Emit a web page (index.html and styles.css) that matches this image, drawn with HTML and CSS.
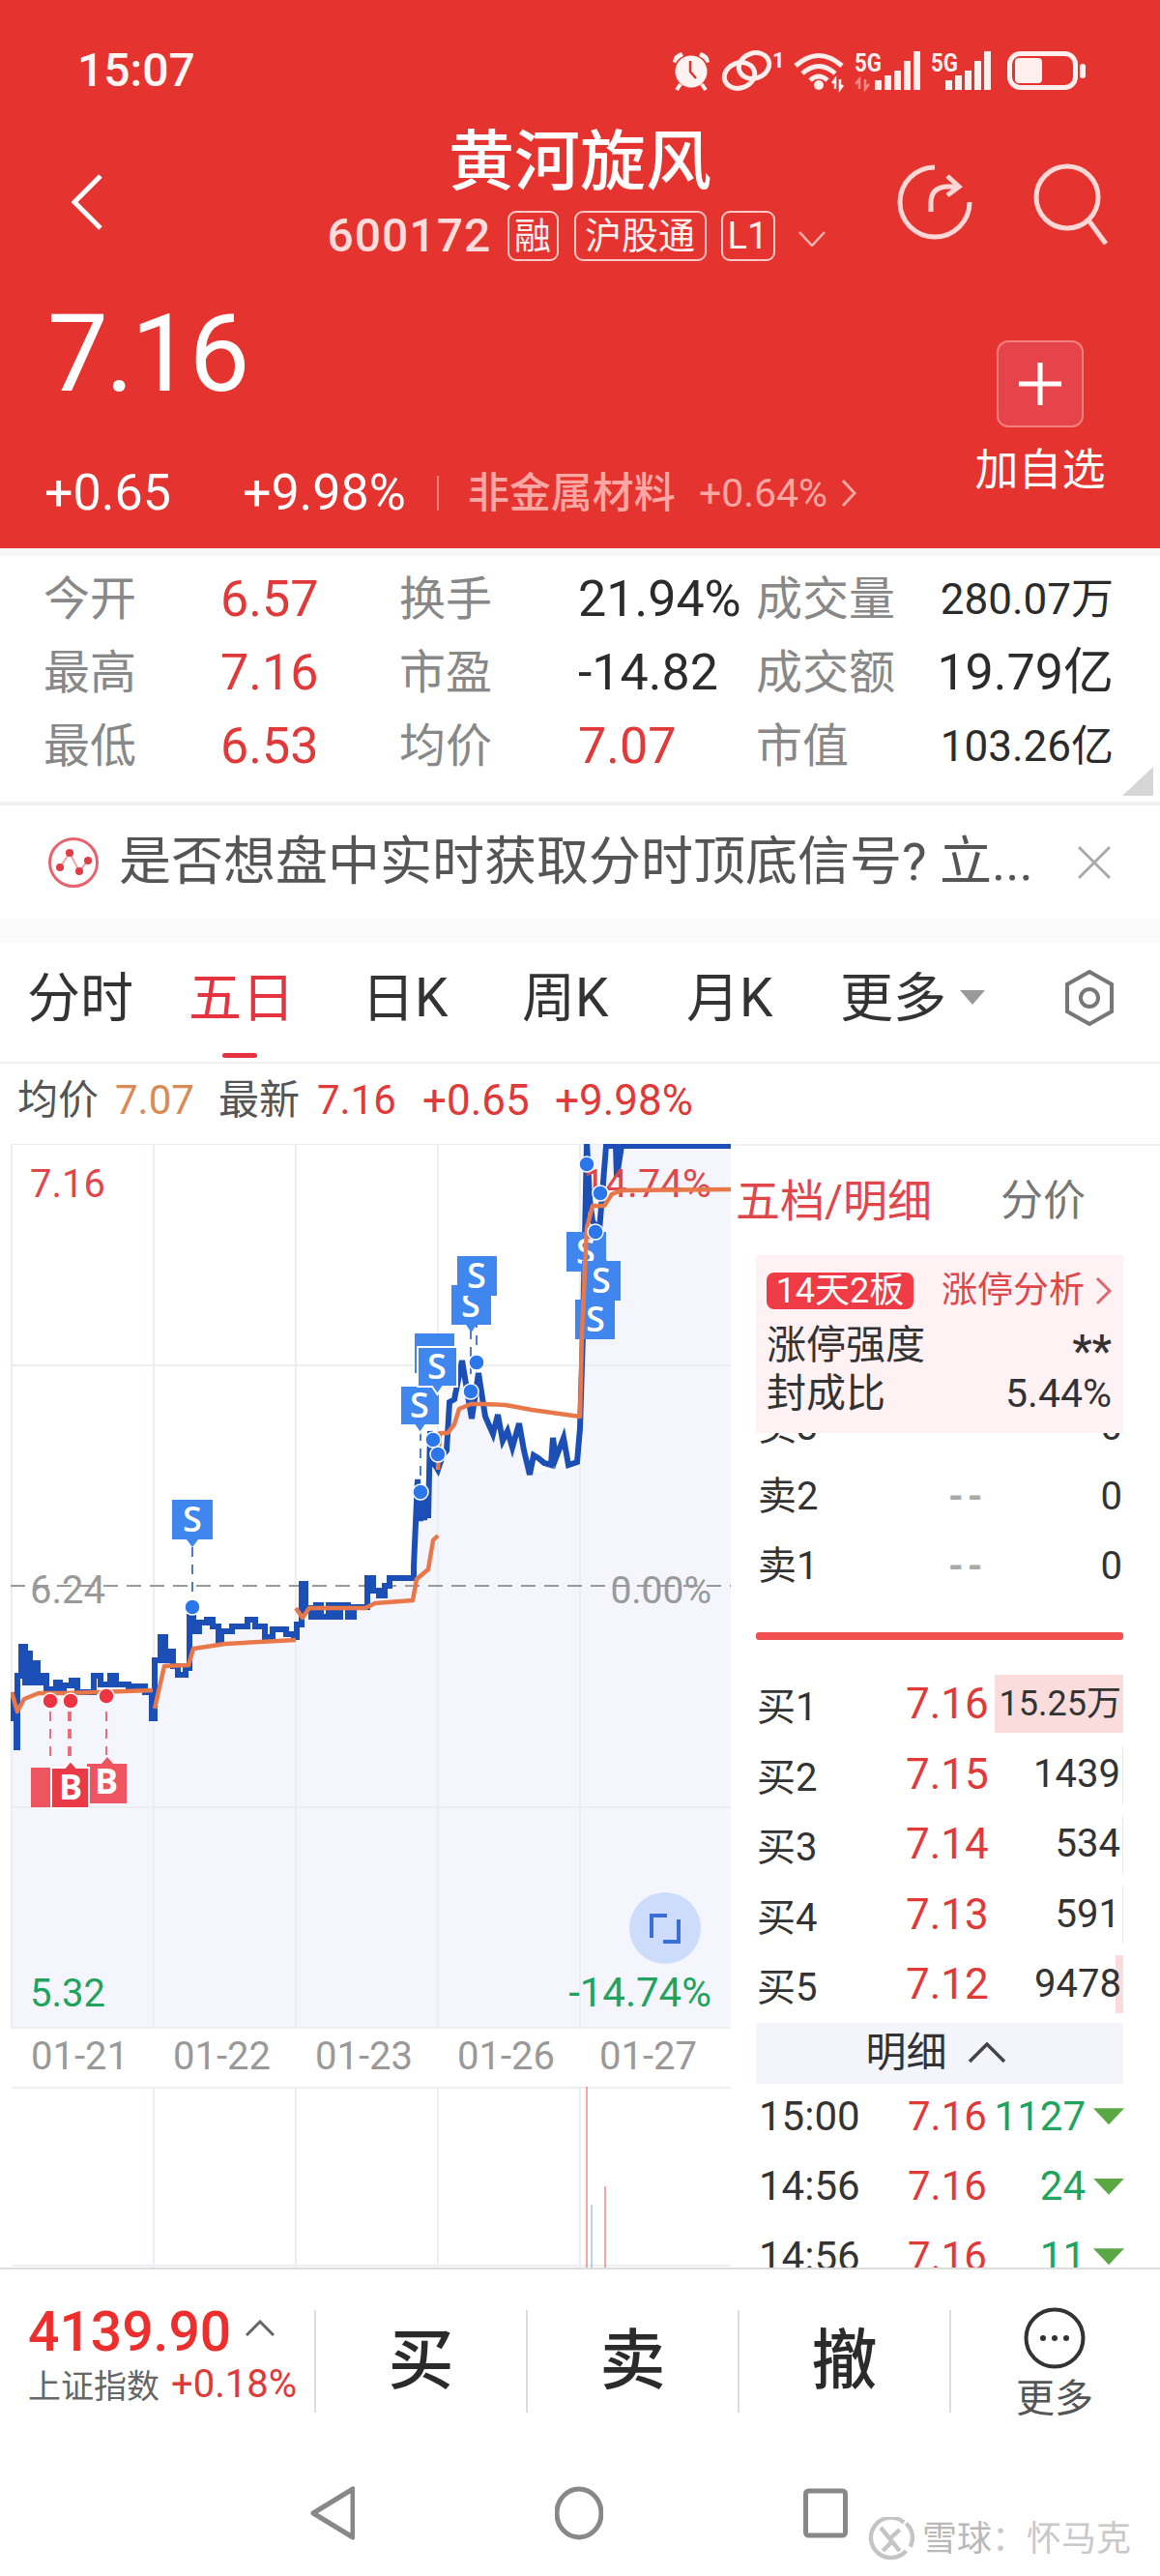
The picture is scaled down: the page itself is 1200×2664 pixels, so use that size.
FILE: index.html
```html
<!DOCTYPE html>
<html lang="zh-CN">
<head>
<meta charset="utf-8">
<title>黄河旋风</title>
<link rel="stylesheet" href="styles.css">
</head>
<body>
<div class="page">
  <header class="hdr">
    <div class="status">
      <span class="time">15:07</span>
      <svg class="status-icons" viewBox="0 0 430 46" width="430" height="46">
        <g class="si-alarm">
          <circle cx="20" cy="24" r="16.500"/>
          <path d="M1 14 Q2 6 10 4 L12 8 Q7 10 4 15Z M39 14 Q38 6 30 4 L28 8 Q33 10 36 15Z"/>
          <path class="si-foot" d="M9 37 L5 43 M31 37 L35 43"/>
          <path class="si-hand" d="M19 13 V24 L25 31"/>
        </g>
        <g class="si-line">
          <ellipse cx="85" cy="18" rx="16" ry="13" transform="rotate(-20 85 18)"/>
          <ellipse cx="70" cy="28" rx="16" ry="13" transform="rotate(-20 70 28)"/>
        </g>
        <text class="si-txt" x="104" y="20" font-size="22">1</text>
        <g class="si-line">
          <path d="M128 18 Q152 -3 176 18"/>
          <path d="M135 26 Q152 11 169 26"/>
          <path d="M143 33 Q152 25 161 33"/>
        </g>
        <circle class="si-fill" cx="152" cy="38" r="5"/>
        <path class="si-thin" d="M169 42 V32 L166 36 M174 32 V42 L177 38"/>
        <text class="si-txt" x="189" y="24" font-size="25" textLength="28" lengthAdjust="spacingAndGlyphs">5G</text>
        <path class="si-thin si-faint" d="M194 42 V32 L190 37 M200 32 V42 L204 37"/>
        <g class="si-fill">
          <rect x="210" y="33" width="7" height="10"/><rect x="220" y="28" width="7" height="15"/><rect x="230" y="23" width="7" height="20"/><rect x="240" y="13" width="7" height="30"/><rect x="250" y="3" width="7" height="40"/>
        </g>
        <text class="si-txt" x="268" y="24" font-size="25" textLength="28" lengthAdjust="spacingAndGlyphs">5G</text>
        <g class="si-fill">
          <rect x="283" y="33" width="7" height="10"/><rect x="293" y="28" width="7" height="15"/><rect x="303" y="23" width="7" height="20"/><rect x="313" y="13" width="7" height="30"/><rect x="323" y="3" width="7" height="40"/>
        </g>
        <rect class="si-line" x="349.500" y="5.500" width="68" height="35" rx="11"/>
        <rect class="si-fill" x="355" y="10" width="28" height="26" rx="4"/>
        <rect class="si-fill" x="422" y="16" width="6" height="15" rx="3"/>
      </svg>
    </div>
    <div class="titlebar">
      <div class="tb-left">
        <svg width="32" height="58" viewBox="0 0 32 58"><path class="ic-white" d="M30 2 L3 29 L30 56"/></svg>
      </div>
      <div class="tb-mid">
        <h1 class="name">黄河旋风</h1>
        <div class="sub">
          <span class="code">600172</span>
          <span class="tag tag-a">融</span>
          <span class="tag tag-b">沪股通</span>
          <span class="tag tag-c">L1</span>
          <svg class="sub-chev" width="28" height="16" viewBox="0 0 28 16"><path d="M1 1 L14 15 L27 1"/></svg>
        </div>
      </div>
      <div class="tb-right">
        <svg width="80" height="80" viewBox="0 0 80 80"><path class="ic-pink" d="M40 4 A36 36 0 1 0 76 40"/><path class="ic-pink" d="M36 50 V41 Q36 25 52 24 L64 24 M53 13 L65 24 L53 33"/></svg>
        <svg width="78" height="86" viewBox="0 0 78 86"><circle class="ic-pink" cx="35" cy="35" r="32"/><path class="ic-pink" d="M58 60 L75 83"/></svg>
      </div>
    </div>
    <div class="quote">
      <div class="q-left">
        <div class="price">7.16</div>
        <div class="q-sub">
          <span class="chg">+0.65</span>
          <span class="pct">+9.98%</span>
          <span class="q-div"></span>
          <span class="sector">非金属材料</span>
          <span class="sector-p">+0.64%</span>
          <svg width="16" height="30" viewBox="0 0 16 30"><path class="ic-faint" d="M2 2 L14 15 L2 28"/></svg>
        </div>
      </div>
      <div class="q-right">
        <div class="add-btn"><svg width="46" height="46" viewBox="0 0 46 46"><path class="ic-white" d="M23 1 V45 M1 23 H45"/></svg></div>
        <div class="add-label">加自选</div>
      </div>
    </div>
  </header>

  <section class="stats">
    <span class="lb">今开</span><span class="up">6.57</span><span class="lb">换手</span><span class="val">21.94%</span><span class="lb">成交量</span><span class="val big">280.07万</span>
    <span class="lb">最高</span><span class="up">7.16</span><span class="lb">市盈</span><span class="val">-14.82</span><span class="lb">成交额</span><span class="val mid">19.79亿</span>
    <span class="lb">最低</span><span class="up">6.53</span><span class="lb">均价</span><span class="up">7.07</span><span class="lb">市值</span><span class="val big">103.26亿</span>
    <i class="corner"></i>
  </section>

  <section class="notice">
    <svg width="54" height="54" viewBox="0 0 54 54"><circle class="n-ring" cx="27" cy="27" r="24.500"/><path class="n-line" d="M13 32 L23 17 L33 36 L42 25"/><circle class="n-dot" cx="13" cy="32" r="4"/><circle class="n-dot" cx="23" cy="17" r="4"/><circle class="n-dot" cx="33" cy="36" r="4"/><circle class="n-dot" cx="42" cy="25" r="4"/></svg>
    <span class="n-text">是否想盘中实时获取分时顶底信号? 立...</span>
    <svg class="n-close" width="36" height="36" viewBox="0 0 36 36"><path d="M2 2 L34 34 M34 2 L2 34"/></svg>
  </section>
  <div class="gap"></div>

  <nav class="tabs">
    <span>分时</span>
    <span class="on">五日</span>
    <span>日K</span>
    <span>周K</span>
    <span>月K</span>
    <span class="more">更多<i class="tri"></i></span>
    <svg width="52" height="60" viewBox="0 0 52 60"><path class="hex" d="M26 3 L49 16 V44 L26 57 L3 44 V16Z"/><circle class="hex" cx="26" cy="30" r="9"/></svg>
  </nav>

  <div class="info">
    <span class="i-l">均价</span><span class="i-o">7.07</span><span class="i-l">最新</span><span class="i-r">7.16</span><span class="i-r i-b">+0.65</span><span class="i-r i-b">+9.98%</span>
  </div>

  <main class="main">
    <div class="left">
      <svg class="chart" width="745" height="915" viewBox="11 1183 745 915">
        <path class="area" d="M12 1777 L13 1777 L17 1807 L18 1733 L23 1703 L27 1740 L33 1740 L37 1720 L42 1740 L52 1747 L60 1747 L77 1738 L83 1750 L97 1750 L103 1733 L108 1742 L117 1733 L123 1742 L150 1745 L158 1760 L160 1777 L163 1717 L169 1693 L177 1710 L187 1732 L193 1725 L197 1672 L200 1687 L220 1680 L227 1697 L230 1687 L257 1675 L275 1693 L303 1695 L310 1680 L315 1638 L320 1663 L378 1665 L383 1632 L390 1645 L402 1650 L407 1632 L427 1632 L432 1530 L443 1570 L445 1480 L453 1520 L462 1500 L465 1450 L478 1407 L488 1467 L495 1420 L510 1483 L520 1490 L537 1472 L548 1525 L597 1512 L600 1477 L603 1380 L607 1183 L756 1183 L756 2098 L12 2098Z"/>
        <g class="grid">
          <path d="M12 1183 H756 M12 1412 H756 M12 1869 H756 M12 2097 H756"/>
          <path d="M12 1183 V2098 M159 1183 V2098 M306 1183 V2098 M453 1183 V2098 M600 1183 V2098"/>
        </g>
        <path class="dash" d="M11 1640 H756"/>
        <text class="ax ax-up" x="31" y="1238">7.16</text>
        <text class="ax ax-mid" x="31" y="1658">6.24</text>
        <text class="ax ax-mid end" x="736" y="1658">0.00%</text>
        <text class="ax ax-dn" x="31" y="2075">5.32</text>
        <text class="ax ax-dn ax-w end" x="736" y="2075">-14.74%</text>

        <path class="p-line" d="M13 1750 V1777 H17 V1807 H18 V1733 H22 V1703 H26 V1740 H28 V1710 H31 V1740 H35 V1720 H39 V1740 H44 V1733 H48 V1747 H58 V1740 H62 V1747 H66 V1743 H74 V1738 H80 V1750 H97 V1733 H104 V1742 H114 V1733 H120 V1742 H133 V1744 H150 V1750 H157 V1777 H160 V1717 H166 V1693 H171 V1717 H175 V1708 H179 V1723 H184 V1732 H192 V1725 H196 V1672 H200 V1687 H206 V1678 H214 V1675 H220 V1682 H226 V1697 H229 V1687 H240 V1682 H256 V1675 H264 V1682 H274 V1693 H282 V1685 H296 V1690 H304 V1693 H307 V1680 H312 V1638 H316 V1663 H322 V1672 H327 V1660 H332 V1672 H340 V1660 H346 V1672 H352 V1660 H360 V1672 H366 V1662 H380 V1632 H386 V1645 H392 V1650 H398 V1640 H403 V1632 H428 V1620 L432 1530 L435 1573 L437 1545 L439 1572 L441 1545 L443 1570 L445 1480 L447 1510 L453 1520 L458 1505 L462 1500 L465 1450 L470 1447 L478 1407 L483 1437 L488 1467 L495 1420 L502 1465 L510 1483 L515 1463 L520 1490 L525 1480 L530 1497 L537 1472 L542 1500 L548 1525 L552 1505 L557 1508 L563 1513 L570 1515 L572 1487 L575 1508 L583 1487 L588 1515 L597 1512 L600 1477 L603 1380 L607 1180 L610 1240 L613 1263 L620 1273 L627 1185 L637 1185 L638 1217 L643 1185 L756 1185"/>

        <path class="m-dash-b" d="M199 1600 V1650 M435 1480 V1530 M487 1375 V1425 M493 1345 V1395"/>
        <path class="m-dash-r" d="M52 1770 V1822 M71 1770 V1822 M73 1770 V1822 M110 1770 V1815"/>

        <g class="flag" transform="translate(178 1551)"><path d="M0 0h42v41h-15l-6 8-6-8H0z"/><text x="21" y="33">S</text></g>
        <g class="flag" transform="translate(467 1329)"><path d="M0 0h41v41h-15l-5.500 8-5.500-8H0z"/><text x="20" y="33">S</text></g>
        <g class="flag" transform="translate(473 1299)"><path d="M0 0h41v41h-15l-5.500 8-5.500-8H0z"/><text x="20" y="33">S</text></g>
        <g class="flag" transform="translate(429 1379)"><path d="M0 0h41v41H0z"/></g>
        <g class="flag flag-o" transform="translate(414 1433)"><path d="M0 0h41v41h-15l-5.500 8-5.500-8H0z"/><text x="20" y="33">S</text></g>
        <g class="flag flag-o" transform="translate(432 1393)"><path d="M0 0h41v41h-15l-5.500 8-5.500-8H0z"/><text x="20" y="33">S</text></g>
        <g class="flag" transform="translate(586 1274)"><path d="M0 0h41v41H0z"/><text x="20" y="33">S</text></g>
        <g class="flag" transform="translate(595 1344)"><path d="M0 41h41V0H0z"/><text x="21" y="33">S</text></g>
        <g class="flag" transform="translate(602 1304)"><path d="M0 41h40V0H26l-6-8-6 8H0z"/><text x="20" y="33">S</text></g>

        <g class="flag-r flag-r1" transform="translate(32 1828)"><path d="M0 0h41v41H0z"/></g>
        <g class="flag-r flag-r2" transform="translate(90 1824)"><path d="M0 0h15l6-7 6 7h14v41H0z"/><text x="20" y="31">B</text></g>
        <g class="flag-r flag-o" transform="translate(53 1828)"><path d="M0 0h14l6-7 6 7h13v42H0z"/><text x="20" y="33">B</text></g>

        <text class="ax ax-up end" x="736" y="1238">14.74%</text>
        <path class="a-line" d="M12 1750 L18 1770 L25 1757 L40 1751 L67 1751 L100 1750 L158 1748 M160 1767 L170 1723 L195 1722 L200 1705 L233 1700 L306 1696 M306 1663 L313 1673 L320 1663 L378 1663 L388 1658 L427 1655 L431 1633 L443 1623 L448 1593 L453 1588 M453 1520 L455 1482 L463 1482 L470 1473 L475 1457 L487 1452 L500 1452 L523 1453 L550 1458 L600 1465 L602 1380 L607 1270 L613 1247 L625 1247 L633 1235 L643 1231 L756 1230"/>

        <g class="dot-b">
          <circle cx="199" cy="1662" r="8"/><circle cx="435" cy="1543" r="8"/><circle cx="448" cy="1489" r="8"/><circle cx="453" cy="1504" r="8"/><circle cx="487" cy="1439" r="8"/><circle cx="493" cy="1409" r="8"/><circle cx="607" cy="1204" r="8"/><circle cx="621" cy="1234" r="8"/><circle cx="616" cy="1274" r="8"/>
        </g>
        <g class="dot-r">
          <circle cx="52" cy="1759" r="8"/><circle cx="73" cy="1759" r="8"/><circle cx="110" cy="1754" r="8"/>
        </g>
        <circle class="expand" cx="688" cy="1994" r="37"/>
        <path class="expand-i" d="M674 2004 V1981 H690 M702 1985 V2008 H686"/>
      </svg>
      <div class="dates"><span>01-21</span><span>01-22</span><span>01-23</span><span>01-26</span><span>01-27</span></div>
      <svg class="vol" width="745" height="187" viewBox="11 2158 745 187">
        <g class="grid">
          <path d="M12 2159 H756 M12 2343 H756"/>
          <path d="M159 2158 V2345 M306 2158 V2345 M453 2158 V2345 M600 2158 V2345"/>
        </g>
        <path class="v-r" d="M607 2158 V2345 M626 2261 V2345"/>
        <path class="v-b" d="M612 2280 V2345"/>
      </svg>
    </div>

    <aside class="right">
      <div class="r-tabs"><span class="r-on">五档/明细</span><span class="r-off">分价</span></div>
      <div class="card">
        <div class="c-row">
          <span class="badge">14天2板</span>
          <span class="c-link">涨停分析<svg width="17" height="30" viewBox="0 0 17 30"><path d="M2 2 L15 15 L2 28"/></svg></span>
        </div>
        <div class="c-line c-first"><span>涨停强度</span><span class="c-star">**</span></div>
        <div class="c-line"><span>封成比</span><span>5.44%</span></div>
      </div>
      <div class="sell"><span>卖3</span><span class="dd">--</span><span class="q">0</span></div>
      <div class="sell"><span>卖2</span><span class="dd">--</span><span class="q">0</span></div>
      <div class="sell"><span>卖1</span><span class="dd">--</span><span class="q">0</span></div>
      <div class="bar"></div>
      <div class="buy"><span>买1</span><span class="bp">7.16</span><span class="bq b-1">15.25万</span></div>
      <div class="buy"><span>买2</span><span class="bp">7.15</span><span class="bq b-t">1439</span></div>
      <div class="buy"><span>买3</span><span class="bp">7.14</span><span class="bq b-t">534</span></div>
      <div class="buy"><span>买4</span><span class="bp">7.13</span><span class="bq b-t">591</span></div>
      <div class="buy"><span>买5</span><span class="bp">7.12</span><span class="bq b-5">9478</span></div>
      <div class="detail">明细<svg width="40" height="22" viewBox="0 0 40 22"><path d="M2 20 L20 2 L38 20"/></svg></div>
      <div class="tick"><span>15:00</span><span class="bp">7.16</span><span class="tq">1127</span><i class="dn"></i></div>
      <div class="tick"><span>14:56</span><span class="bp">7.16</span><span class="tq">24</span><i class="dn"></i></div>
      <div class="tick"><span>14:56</span><span class="bp">7.16</span><span class="tq">11</span><i class="dn"></i></div>
    </aside>
  </main>

  <footer class="bottom">
    <div class="idx">
      <div class="idx-top"><span class="idx-num">4139.90</span><svg width="30" height="17" viewBox="0 0 30 17"><path d="M1 16 L15 2 L29 16"/></svg></div>
      <div class="idx-sub"><span class="idx-name">上证指数</span><span class="idx-pct">+0.18%</span></div>
    </div>
    <div class="act">买</div>
    <div class="act">卖</div>
    <div class="act">撤</div>
    <div class="act-more">
      <svg width="64" height="64" viewBox="0 0 64 64"><circle cx="32" cy="32" r="29.500"/><circle class="md" cx="20" cy="32" r="3"/><circle class="md" cx="32" cy="32" r="3"/><circle class="md" cx="44" cy="32" r="3"/></svg>
      <span>更多</span>
    </div>
  </footer>

  <div class="navbar">
    <svg width="46" height="56" viewBox="0 0 46 56"><path d="M44 3 V53 L3 28Z"/></svg>
    <svg width="50" height="56" viewBox="0 0 50 56"><ellipse cx="25" cy="28" rx="23" ry="25"/></svg>
    <svg width="46" height="56" viewBox="0 0 46 56"><rect x="2.500" y="5" width="41" height="46" rx="3"/></svg>
    <div class="mark">
      <svg width="48" height="46" viewBox="0 0 44 42"><path d="M34 5 A19 19 0 1 0 36 32"/><path d="M12 10 L30 32 M30 12 L20 21 M14 32 L22 24 M36 6 A18 18 0 0 1 40 28"/></svg>
      <span class="mk-a">雪球</span><span class="mk-b">：怀马克</span>
    </div>
  </div>
</div>
</body>
</html>
```
FILE: styles.css
```css
* { box-sizing: border-box; }
html, body { margin: 0; padding: 0; background: #fff; }
body { font-family: Roboto, "Noto Sans CJK SC", sans-serif; color: #333; }
.page { width: 1200px; height: 2664px; overflow: hidden; }
svg { display: block; }
i { font-style: normal; }

/* header */
.hdr { height: 567px; background: #e5342f; color: #fff; }
.status { display: flex; justify-content: space-between; align-items: center; height: 96px; padding: 50px 75px 0 80px; }
.time { font-size: 48px; line-height: 46px; font-weight: 500; color: #fff6f4; }
.si-alarm circle, .si-alarm > path { fill: #fff3f1; }
.si-alarm .si-foot { fill: none; stroke: #fff3f1; stroke-width: 4; }
.si-alarm .si-hand { fill: none; stroke: #e5342f; stroke-width: 2.500; }
.si-line { fill: none; stroke: #ffeeec; stroke-width: 5; }
.si-fill { fill: #fff0ee; }
.si-thin { fill: none; stroke: #fff0ee; stroke-width: 2.500; }
.si-faint { stroke: #f08a84; }
.si-txt { fill: #fff0ee; font-family: Roboto, sans-serif; font-weight: 700; }

.titlebar { display: grid; grid-template-columns: 1fr auto 1fr; height: 157px; margin-top: 34px; }
.tb-left { padding: 50px 0 0 74px; }
.ic-white { fill: none; stroke: #fff; stroke-width: 5; }
.ic-pink { fill: none; stroke: #ffd7d5; stroke-width: 5; }
.ic-faint { fill: none; stroke: #f9a8a4; stroke-width: 3; }
.tb-right { display: flex; justify-content: flex-end; align-items: flex-start; gap: 62px; padding: 39px 53px 0 0; }
.tb-mid { display: flex; flex-direction: column; align-items: center; }
.name { margin: 0; font-size: 68px; line-height: 76px; font-weight: 500; color: #fff; }
.sub { display: flex; align-items: center; height: 52px; margin: 12px 8px 0 0; color: #ffdcda; }
.code { width: 167px; font-size: 48px; font-weight: 500; letter-spacing: 1px; line-height: 52px; }
.tag { display: flex; justify-content: center; align-items: center; height: 52px; border: 2px solid #ffc9c6; border-radius: 9px; font-size: 38px; line-height: 40px; color: #fff0ee; }
.tag-a { width: 53px; margin-left: 19px; }
.tag-b { width: 137px; margin-left: 16px; }
.tag-c { width: 56px; margin-left: 15px; }
.sub-chev { margin: 6px 0 0 24px; fill: none; stroke: #f9b5b1; stroke-width: 2.500; }

.quote { display: flex; justify-content: space-between; height: 264px; padding-right: 58px; }
.q-left { padding-left: 46px; }
.price { margin-top: 24px; padding-left: 3px; font-size: 112px; line-height: 110px; color: #fff; letter-spacing: -3px; }
.q-sub { display: flex; align-items: center; height: 50px; margin-top: 64px; }
.chg, .pct { font-size: 52px; line-height: 50px; color: #fff; }
.pct { margin-left: 74px; }
.q-div { width: 2px; height: 36px; margin: 0 30px 0 32px; background: #f47f7a; }
.sector { font-size: 43px; line-height: 50px; color: #fba7a3; font-weight: 500; }
.sector-p { margin: 0 14px 0 24px; font-size: 41px; line-height: 50px; color: #fba7a3; }
.q-right { display: flex; flex-direction: column; align-items: center; width: 132px; margin-top: 65px; }
.add-btn { display: flex; justify-content: center; align-items: center; width: 90px; height: 90px; border: 2px solid #f4817d; border-radius: 12px; background: #e7434a; }
.add-label { margin-top: 20px; font-size: 45px; line-height: 50px; color: #fff; white-space: nowrap; }

/* stats */
.stats { position: relative; display: grid; grid-template-columns: 183px 185px 185px 184px 180px 1fr; grid-auto-rows: 76px; align-items: center; height: 266px; padding: 7px 48px 0 45px; border-top: 8px solid #f8f8f8; border-bottom: 4px solid #f1f1f1; }
.stats > span { line-height: 60px; white-space: nowrap; }
.lb { font-size: 48px; color: #888; }
.up { font-size: 52px; color: #e0393a; }
.val { font-size: 52px; color: #2b2b2b; }
.val.big, .val.mid { grid-column: 6; justify-self: end; }
.val.big { font-size: 44px; }
.val.mid { font-size: 52px; }
.corner { position: absolute; right: 7px; bottom: 6px; width: 32px; height: 30px; background: #d6d6d6; clip-path: polygon(100% 0, 100% 100%, 0 100%); }

/* notice */
.notice { display: flex; align-items: center; height: 118px; padding: 0 0 0 49px; }
.n-ring { fill: #fff; stroke: #e8636f; stroke-width: 3; }
.n-line { fill: none; stroke: #f2a3a9; stroke-width: 2; }
.n-dot { fill: #e23a46; }
.n-text { width: 991px; margin-left: 20px; font-size: 54px; line-height: 60px; color: #555; white-space: nowrap; }
.n-close { fill: none; stroke: #aaa; stroke-width: 3; }
.gap { height: 24px; background: #fbfbfb; }

/* tabs */
.tabs { display: grid; grid-template-columns: 167px 179px 166px 170px 162px 229px auto; align-items: center; height: 125px; padding: 0 0 10px 28px; border-bottom: 2px solid #eee; font-size: 55px; color: #333; }
.tabs > span { position: relative; line-height: 60px; white-space: nowrap; }
.tabs .on { color: #e5343f; }
.tabs .on::after { content: ""; position: absolute; left: 35px; top: 87px; width: 36px; height: 5px; border-radius: 3px; background: #e5343f; }
.more { display: flex; align-items: center; margin-left: -3px; }
.tri { width: 26px; height: 15px; margin-left: 14px; background: #999; clip-path: polygon(0 0, 100% 0, 50% 100%); }
.hex { fill: none; stroke: #777; stroke-width: 4; }

/* info */
.info { display: grid; grid-template-columns: 101px 107px 102px 109px 137px auto; justify-content: start; align-items: center; height: 83px; padding: 0 0 8px 18px; font-size: 42px; }
.info span { line-height: 50px; white-space: nowrap; }
.i-l { color: #555; }
.i-o { color: #d98a55; }
.i-r { color: #e0393a; }
.i-r.i-b { font-size: 44px; }

/* main */
.main { display: flex; height: 1162px; overflow: hidden; }
.left { width: 756px; padding-left: 11px; flex: none; }
.grid path { fill: none; stroke: #eceef3; stroke-width: 2; }
.area { fill: #f5f6fd; }
.dash { fill: none; stroke: #9a9a9a; stroke-width: 2; stroke-dasharray: 15 9; }
.ax { font-size: 40px; font-family: Roboto, sans-serif; }
.ax.end { font-size: 39px; }
.ax.ax-w { font-size: 42px; }
.ax-up.end { font-size: 41px; }
.end { text-anchor: end; }
.ax-up { fill: #e0464a; }
.ax-mid { fill: #999; }
.ax-dn { fill: #1fa35f; }
.p-line { fill: none; stroke: #1b4fb5; stroke-width: 6; stroke-linejoin: miter; }
.a-line { fill: none; stroke: #e8784a; stroke-width: 4.500; stroke-linejoin: round; }
.m-dash-b { fill: none; stroke: #4f7cc8; stroke-width: 2; stroke-dasharray: 10 8; }
.m-dash-r { fill: none; stroke: #e8707c; stroke-width: 2; stroke-dasharray: 10 8; }
.flag path { fill: #3f86ee; }
.flag text { fill: #fff; font-size: 36px; font-family: "Open Sans", sans-serif; font-weight: 600; text-anchor: middle; }
.flag-o path { stroke: #fff; stroke-width: 2; }
.flag-r path { fill: #ee5560; }
.flag-r text { fill: #fff; font-size: 36px; font-family: "Open Sans", sans-serif; font-weight: 700; text-anchor: middle; }
.flag-r.flag-o path { fill: #ea3a48; }
.dot-b circle { fill: #2a76ea; stroke: #fff; stroke-width: 1.500; }
.dot-r circle { fill: #ef3340; stroke: #fff; stroke-width: 1.500; }
.expand { fill: #cddcfb; }
.expand-i { fill: none; stroke: #3a6fd8; stroke-width: 4; }
.dates { display: grid; grid-template-columns: repeat(5, 147px); height: 60px; padding-left: 21px; font-size: 40px; line-height: 58px; color: #999; }
.v-r { fill: none; stroke: #e8505a; stroke-width: 1; }
.v-b { fill: none; stroke: #7fa7d8; stroke-width: 1; }

/* right */
.right { width: 444px; padding: 0 38px 0 26px; flex: none; border-top: 2px solid #f1f1f1; }
.r-tabs { display: flex; align-items: center; height: 113px; margin-left: -21px; }
.r-on { font-size: 46px; line-height: 60px; color: #e0474b; white-space: nowrap; }
.r-off { margin-left: 71px; font-size: 44px; line-height: 60px; color: #777; }
.card { position: relative; z-index: 1; height: 184px; margin-bottom: -42px; padding: 18px 12px 0 11px; background: #fff2f5; }
.c-row { display: flex; justify-content: space-between; align-items: center; height: 38px; }
.badge { width: 152px; height: 38px; border-radius: 8px; background: #ee3b45; color: #fff; font-size: 36px; line-height: 38px; text-align: center; white-space: nowrap; }
.c-link { display: flex; align-items: center; gap: 11px; font-size: 37px; line-height: 38px; color: #e0474b; white-space: nowrap; }
.c-link path { fill: none; stroke: #e0656a; stroke-width: 3; }
.c-line { display: flex; justify-content: space-between; height: 50px; font-size: 41px; line-height: 50px; color: #333; }
.c-first { margin-top: 12px; }
.c-star { font-size: 46px; line-height: 62px; font-weight: 500; }
.sell { display: grid; grid-template-columns: 197px auto 1fr; align-items: center; height: 72px; padding-left: 2px; font-size: 40px; line-height: 50px; color: #333; }
.dd { color: #aaa; font-weight: 700; letter-spacing: 4px; }
.q { text-align: right; padding-right: 1px; }
.bar { height: 8px; margin-top: 32px; border-radius: 3px; background: #f05050; }
.buy { display: grid; grid-template-columns: 154px 90px 1fr; align-items: center; height: 72.500px; padding-left: 1px; font-size: 40px; color: #333; }
.bar + .buy { margin-top: 30px; }
.bp { font-size: 44px; color: #e0393a; line-height: 50px; }
.bq { justify-self: end; width: 133px; height: 60px; line-height: 60px; text-align: right; padding-right: 2px; white-space: nowrap; }
.b-1 { font-size: 36px; background: #fadcdc; }
.b-t { border-right: 1px solid #e6e6e6; }
.b-5 { background: linear-gradient(to left, #fadcdc 8px, transparent 8px); }
.detail { display: flex; justify-content: center; align-items: center; gap: 21px; height: 63px; margin-top: 3px; padding-right: 8px; background: #f3f5fb; font-size: 42px; line-height: 50px; color: #333; }
.detail path { fill: none; stroke: #444; stroke-width: 3.500; }
.tick { display: grid; grid-template-columns: 154px 86px 98px auto; align-items: center; height: 72.500px; padding-left: 3px; font-size: 42px; line-height: 50px; color: #333; }
.tick .bp { font-size: 42px; }
.detail + .tick { margin-top: -2px; }
.tq { text-align: right; color: #1fa35f; font-size: 42px; }
.dn { width: 32px; height: 17px; margin-left: 8px; background: #5aa844; clip-path: polygon(0 0, 100% 0, 50% 100%); }

/* bottom */
.bottom { display: grid; grid-template-columns: 325px 219px 219px 219px 1fr; height: 195px; padding-top: 42px; border-top: 2px solid #ddd; align-items: start; }
.idx { height: 106px; padding-left: 29px; }
.idx-top { display: flex; align-items: center; height: 50px; margin-top: -2px; }
.idx-num { font-size: 57px; line-height: 50px; color: #ee2d2d; font-weight: 500; }
.idx-top path { fill: none; stroke: #666; stroke-width: 3; }
.idx-top svg { margin: 0 0 10px 15px; }
.idx-sub { display: flex; align-items: center; height: 44px; margin-top: 6px; white-space: nowrap; }
.idx-name { font-size: 34px; color: #666; }
.idx-pct { margin-left: 12px; font-size: 40px; color: #e0393a; }
.act { display: flex; justify-content: center; align-items: center; height: 106px; border-left: 2px solid #ddd; font-size: 68px; font-weight: 500; color: #2b2b2b; line-height: 76px; }
.act-more { display: flex; flex-direction: column; align-items: center; height: 106px; border-left: 2px solid #ddd; padding-right: 2px; font-size: 40px; line-height: 50px; color: #555; }
.act-more svg { flex: none; margin-top: -3px; }
.act-more svg > circle { fill: none; stroke: #333; stroke-width: 4; }
.act-more .md { fill: #333; stroke: none; }
.act-more span { margin-top: 6px; }

.navbar { position: relative; display: flex; align-items: flex-start; gap: 207px; height: 124px; padding: 31px 0 0 321px; }
.navbar svg path, .navbar svg ellipse, .navbar svg rect { fill: none; stroke: #888; stroke-width: 5; stroke-linejoin: round; }
.mark { position: absolute; left: 898px; top: 63px; display: flex; align-items: center; font-size: 36px; line-height: 44px; white-space: nowrap; }
.navbar .mark svg path { stroke: #c4c4c4; stroke-width: 4; }
.mk-a { margin-left: 8px; color: #b9b9b9; }
.mk-b { color: #c9c9c9; }
```
